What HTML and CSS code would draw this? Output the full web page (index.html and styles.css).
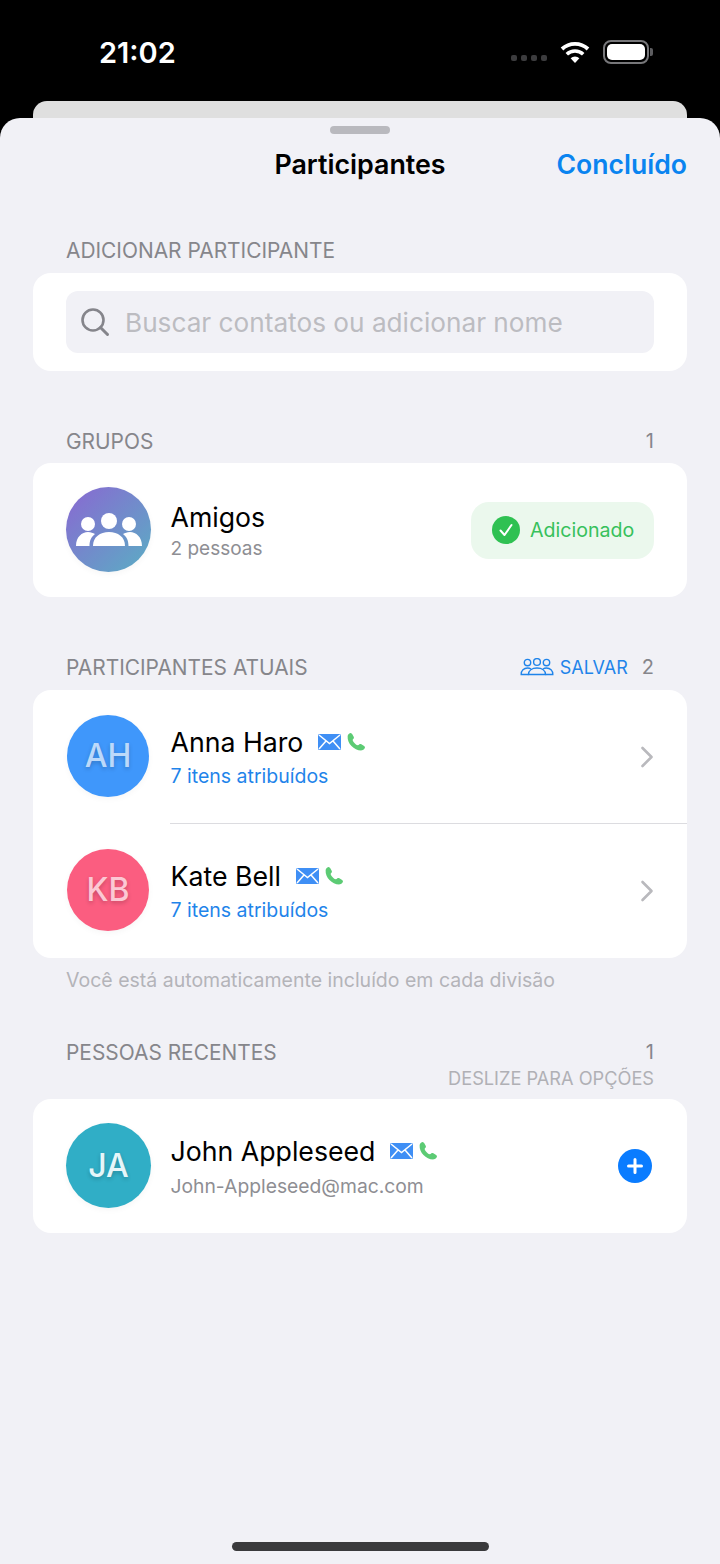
FILE: index.html
```html
<!DOCTYPE html>
<html lang="pt-BR">
<head>
    <meta charset="UTF-8">
    <title>Participantes</title>
    <link rel="stylesheet" href="styles.css">
</head>
<body>
    <div class="status">
        <span class="time">21:02</span>
        <div class="status-right">
            <div class="signal"><i></i><i></i><i></i><i></i></div>
            <svg class="wifi" width="32" height="24" viewBox="0 0 32 24">
                <path d="M16 23 L11.6 18.2 A6.5 6.5 0 0 1 20.4 18.2 Z" fill="#fff"/>
                <path d="M7.8 14.2 A12 12 0 0 1 24.2 14.2" fill="none" stroke="#fff" stroke-width="3.6"/>
                <path d="M3 9 A19 19 0 0 1 29 9" fill="none" stroke="#fff" stroke-width="3.8"/>
            </svg>
            <div class="battery"><div class="battery-fill"></div></div>
            <div class="battery-tip"></div>
        </div>
    </div>

    <div class="back-sheet"></div>

    <div class="sheet">
        <div class="handle"></div>
        <div class="nav">
            <span class="nav-title">Participantes</span>
            <span class="nav-done">Concluído</span>
        </div>

        <div class="section-head first"><span>ADICIONAR PARTICIPANTE</span></div>
        <div class="card search-card">
            <div class="search">
                <svg width="30" height="30" viewBox="0 0 30 30">
                    <circle cx="13" cy="13" r="10.5" fill="none" stroke="#85858b" stroke-width="2.6"/>
                    <path d="M20.5 20.5 L27.5 27.5" stroke="#85858b" stroke-width="3" stroke-linecap="round"/>
                </svg>
                <span class="placeholder">Buscar contatos ou adicionar nome</span>
            </div>
        </div>

        <div class="section-head groups"><span>GRUPOS</span><span class="count">1</span></div>
        <div class="card row group-row">
            <div class="avatar group-avatar">
                <svg width="66" height="36" viewBox="0 0 66 36">
                    <g fill="#fff">
                        <circle cx="12" cy="12" r="7"/>
                        <circle cx="33" cy="9" r="8"/>
                        <circle cx="53" cy="12" r="7"/>
                        <path d="M0 34 C0 25 6 20 12 20 C15 20 17 21 19 22 C15 25 13.5 29 13.5 34 Z"/>
                        <path d="M66 34 C66 25 60 20 54 20 C51 20 49 21 47 22 C51 25 52.5 29 52.5 34 Z"/>
                        <path d="M17 34 C17 25 24 20 33 20 C42 20 49 25 49 34 Z"/>
                    </g>
                </svg>
            </div>
            <div class="info">
                <div class="name">Amigos</div>
                <div class="sub">2 pessoas</div>
            </div>
            <div class="added">
                <span class="added-check">
                    <svg width="16" height="16" viewBox="0 0 16 16"><path d="M2.5 8.5 L6.5 13 L13.5 3" fill="none" stroke="#fff" stroke-width="2" stroke-linecap="round" stroke-linejoin="round"/></svg>
                </span>
                <span>Adicionado</span>
            </div>
        </div>

        <div class="section-head current">
            <span>PARTICIPANTES ATUAIS</span>
            <div class="head-right">
                <svg width="34" height="18" viewBox="0 0 34 18">
                    <g fill="none" stroke="#1f84ea" stroke-width="1.4">
                        <circle cx="7.5" cy="4.6" r="3.2"/>
                        <circle cx="17" cy="4" r="3.4"/>
                        <circle cx="26.5" cy="4.6" r="3.2"/>
                        <path d="M8.5 16.5 H1.2 C1 12.5 4 10 7.5 10 C9 10 10 10.3 11 11"/>
                        <path d="M25.5 16.5 H32.8 C33 12.5 30 10 26.5 10 C25 10 24 10.3 23 11"/>
                        <path d="M8.5 16.5 C8.5 12.5 12 10 17 10 C22 10 25.5 12.5 25.5 16.5 Z"/>
                    </g>
                </svg>
                <span class="save">SALVAR</span>
                <span class="count">2</span>
            </div>
        </div>
        <div class="card people-card">
            <div class="row person">
                <div class="avatar blue"><span>AH</span></div>
                <div class="info">
                    <div class="name">Anna Haro
                        <svg class="mail" width="23" height="16" viewBox="0 0 23 16"><use href="#mail"/></svg>
                        <svg class="phone" width="18" height="18" viewBox="0 0 17 17"><use href="#phone"/></svg>
                    </div>
                    <div class="sub link">7 itens atribuídos</div>
                </div>
                <svg class="chevron" width="14" height="22" viewBox="0 0 14 22"><path d="M2.5 2 L11.5 11 L2.5 20" fill="none" stroke="#b9b9bd" stroke-width="2.6" stroke-linecap="round" stroke-linejoin="round"/></svg>
            </div>
            <div class="divider"></div>
            <div class="row person">
                <div class="avatar pink"><span>KB</span></div>
                <div class="info">
                    <div class="name">Kate Bell
                        <svg class="mail" width="23" height="16" viewBox="0 0 23 16"><use href="#mail"/></svg>
                        <svg class="phone" width="18" height="18" viewBox="0 0 17 17"><use href="#phone"/></svg>
                    </div>
                    <div class="sub link">7 itens atribuídos</div>
                </div>
                <svg class="chevron" width="14" height="22" viewBox="0 0 14 22"><path d="M2.5 2 L11.5 11 L2.5 20" fill="none" stroke="#b9b9bd" stroke-width="2.6" stroke-linecap="round" stroke-linejoin="round"/></svg>
            </div>
        </div>
        <div class="footnote">Você está automaticamente incluído em cada divisão</div>

        <div class="section-head recent"><span>PESSOAS RECENTES</span><span class="count">1</span></div>
        <div class="swipe-hint">DESLIZE PARA OPÇÕES</div>
        <div class="card row recent-row">
            <div class="avatar teal"><span>JA</span></div>
            <div class="info">
                <div class="name">John Appleseed
                    <svg class="mail" width="23" height="16" viewBox="0 0 23 16"><use href="#mail"/></svg>
                    <svg class="phone" width="18" height="18" viewBox="0 0 17 17"><use href="#phone"/></svg>
                </div>
                <div class="sub">John-Appleseed@mac.com</div>
            </div>
            <div class="plus">
                <svg width="18" height="18" viewBox="0 0 18 18"><path d="M9 2.5 V15.5 M2.5 9 H15.5" stroke="#fff" stroke-width="3" stroke-linecap="round"/></svg>
            </div>
        </div>

        <div class="home-bar"></div>
    </div>

    <svg class="defs" width="0" height="0">
        <defs>
            <g id="mail">
                <rect width="23" height="16" rx="1.5" fill="#3f8ff5"/>
                <path d="M1 1 L11.5 9.5 L22 1 M1 15 L8 7 M22 15 L15 7" fill="none" stroke="#fff" stroke-width="1.5"/>
            </g>
            <g id="phone">
                <path d="M.6 3 C.6 1.6 2.4 0 3.6 0 C4.6 0 6.8 3.8 6.6 4.8 C6.4 5.6 5.2 6 5.4 6.8 C5.8 8.6 8.4 11.2 10.2 11.6 C11 11.8 11.4 10.6 12.2 10.4 C13.2 10.2 17 12.4 17 13.4 C17 14.6 15.4 16.4 14 16.4 C7 16.8 0 10 .6 3 Z" fill="#5ccb74"/>
            </g>
        </defs>
    </svg>
</body>
</html>
```

FILE: styles.css
```css
* {
    box-sizing: border-box;
}

html, body {
    margin: 0;
    padding: 0;
}

body {
    width: 720px;
    height: 1564px;
    background-color: #000;
    font-family: Inter, "Liberation Sans", sans-serif;
    overflow: hidden;
}

.status {
    height: 101px;
    padding: 34px 67px 0 99px;
    display: flex;
    justify-content: space-between;
    align-items: flex-start;
    color: #fff;
}

.time {
    font-size: 29px;
    line-height: 38px;
    font-weight: 600;
}

.status-right {
    display: flex;
    align-items: center;
    padding-top: 6px;
}

.signal {
    display: flex;
    gap: 4px;
    margin-right: 12px;
    margin-top: 12px;
}

.signal i {
    width: 6px;
    height: 6px;
    border-radius: 2px;
    background-color: #3c3c3e;
}

.wifi {
    margin-right: 12px;
}

.battery {
    height: 24px;
    width: 46px;
    border: 2px solid #77777a;
    border-radius: 8px;
    padding: 2px;
}

.battery-fill {
    height: 100%;
    background-color: #fff;
    border-radius: 5px;
}

.battery-tip {
    width: 3px;
    height: 8px;
    background-color: #5d5d60;
    border-radius: 0 2px 2px 0;
    margin-left: 1px;
}

.back-sheet {
    height: 17px;
    margin: 0 33px;
    background-color: #dfdfdf;
    border-radius: 14px 14px 0 0;
}

.sheet {
    height: 1446px;
    background-color: #f1f1f6;
    border-radius: 20px 20px 0 0;
    padding: 8px 33px 0;
    position: relative;
}

.handle {
    width: 60px;
    height: 8px;
    margin: 0 auto;
    border-radius: 4px;
    background-color: #b9b9be;
}

.nav {
    display: flex;
    justify-content: flex-end;
    align-items: center;
    height: 60px;
    position: relative;
}

.nav-title {
    position: absolute;
    left: 0;
    right: 0;
    text-align: center;
    font-size: 26.8px;
    font-weight: 600;
    color: #000;
}

.nav-done {
    position: relative;
    font-size: 26.6px;
    font-weight: 600;
    color: #0a84f0;
}

.section-head {
    display: flex;
    justify-content: space-between;
    align-items: center;
    padding: 0 33px;
    height: 24px;
    font-size: 20.9px;
    color: #86868b;
}

.section-head.first {
    margin-top: 44px;
    margin-bottom: 11px;
}

.section-head.groups {
    margin-top: 58px;
    margin-bottom: 10px;
}

.section-head.current {
    margin-top: 58px;
    margin-bottom: 11px;
}

.section-head.recent {
    margin-top: 47px;
}

.head-right {
    display: flex;
    align-items: center;
}

.save {
    color: #1f84ea;
    font-size: 18px;
    margin-left: 6px;
    margin-right: 14px;
}

.count {
    font-size: 20px;
}

.card {
    background-color: #fff;
    border-radius: 18px;
}

.search-card {
    height: 98px;
    padding: 18px 33px;
}

.search {
    height: 62px;
    background-color: #f1f1f6;
    border-radius: 12px;
    display: flex;
    align-items: center;
    padding-left: 14px;
    gap: 15px;
}

.placeholder {
    font-size: 26.2px;
    color: #bcbcc1;
}

.row {
    display: flex;
    align-items: center;
}

.group-row, .recent-row {
    height: 134px;
    padding: 0 33px;
}

.avatar {
    width: 85px;
    height: 85px;
    margin-bottom: 2px;
    border-radius: 50%;
    flex: none;
    display: flex;
    align-items: center;
    justify-content: center;
    font-size: 32px;
    font-weight: 500;
    box-shadow: 0 2px 6px rgba(0, 0, 0, 0.04);
}

.avatar span {
    text-shadow: 0 2px 4px rgba(0, 0, 0, 0.2);
}

.group-avatar {
    background: linear-gradient(135deg, #8a67d2, #5aaec4);
    margin-bottom: 1px;
}

.blue {
    width: 82px;
    height: 82px;
    margin-left: 1px;
    background-color: #3f97fb;
    color: #bcd9fa;
}

.pink {
    width: 82px;
    height: 82px;
    margin-left: 1px;
    background-color: #fb5d80;
    color: #fcc8d4;
}

.teal {
    background-color: #30aec6;
    color: #e6f6f9;
}

.info {
    margin-left: 19.5px;
    flex: 1;
}

.person .info {
    margin-left: 21.5px;
}

.name {
    font-size: 26.7px;
    line-height: 34px;
    color: #000;
    display: flex;
    align-items: center;
}

.sub {
    font-size: 19.3px;
    line-height: 26px;
    margin-top: 4px;
    color: #8e8e93;
}

.sub.link {
    font-size: 19.5px;
    color: #1f84ea;
}

.group-row .info {
    padding-top: 2px;
}

.group-row .sub {
    font-size: 19px;
    margin-top: 2px;
}

.recent-row .info {
    padding-top: 1px;
}

.recent-row .sub {
    margin-top: 5px;
}

.mail {
    margin-left: 15px;
}

.phone {
    margin-left: 6px;
}

.added {
    width: 183px;
    height: 57px;
    border-radius: 18px;
    background-color: #ebf8ed;
    color: #37c15c;
    font-size: 19.6px;
    display: flex;
    align-items: center;
    padding-left: 21px;
    gap: 10px;
}

.added-check {
    width: 28px;
    height: 28px;
    border-radius: 50%;
    background-color: #2fc152;
    display: flex;
    align-items: center;
    justify-content: center;
}

.person {
    height: 133px;
    padding: 0 33px;
}

.divider {
    height: 1px;
    margin-left: 137px;
    background-color: #dcdce0;
}

.people-card {
    height: 268px;
}

.footnote {
    padding: 0 33px;
    margin-top: 9px;
    font-size: 19.5px;
    line-height: 26px;
    color: #b4b4b9;
}

.swipe-hint {
    text-align: right;
    padding: 0 33px;
    font-size: 18.2px;
    line-height: 22px;
    margin-top: 3px;
    margin-bottom: 10px;
    color: #b0b0b5;
}

.plus {
    width: 34px;
    height: 34px;
    border-radius: 50%;
    background-color: #0a7cff;
    display: flex;
    align-items: center;
    justify-content: center;
    margin-right: 2px;
}

.home-bar {
    position: absolute;
    left: 232px;
    bottom: 13px;
    width: 257px;
    height: 9px;
    border-radius: 5px;
    background-color: #3a3a3c;
}

.defs {
    position: absolute;
}
```
